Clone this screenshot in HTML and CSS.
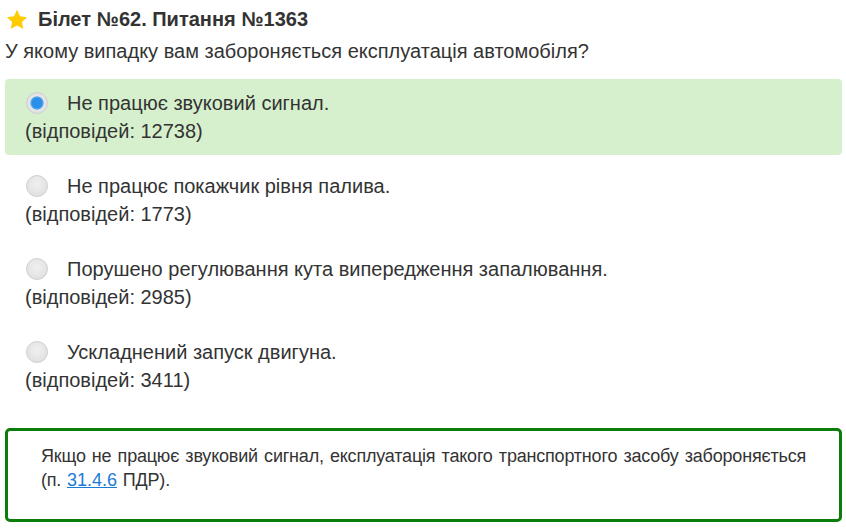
FILE: index.html
```html
<!DOCTYPE html>
<html lang="uk">
<head>
<meta charset="utf-8">
<link rel="stylesheet" href="styles.css">
</head>
<body>
<div class="page">
  <h1 class="title">
    <svg class="star" width="22" height="21" viewBox="0 0 24 23"><path d="M12 0.8l3.3 7.2 7.9 0.9-5.9 5.3 1.7 7.8L12 18l-7 4 1.7-7.8L0.8 8.9l7.9-0.9z" fill="#ffcc00"/></svg>
    Білет №62. Питання №1363
  </h1>
  <p class="question">У якому випадку вам забороняється експлуатація автомобіля?</p>
  <div class="answers">
    <div class="answer correct">
      <div class="answer-line"><span class="radio checked"></span><span>Не працює звуковий сигнал.</span></div>
      <div class="count">(відповідей: 12738)</div>
    </div>
    <div class="answer">
      <div class="answer-line"><span class="radio"></span><span>Не працює покажчик рівня палива.</span></div>
      <div class="count">(відповідей: 1773)</div>
    </div>
    <div class="answer">
      <div class="answer-line"><span class="radio"></span><span>Порушено регулювання кута випередження запалювання.</span></div>
      <div class="count">(відповідей: 2985)</div>
    </div>
    <div class="answer">
      <div class="answer-line"><span class="radio"></span><span>Ускладнений запуск двигуна.</span></div>
      <div class="count">(відповідей: 3411)</div>
    </div>
  </div>
  <div class="explain">
    <p>Якщо не працює звуковий сигнал, експлуатація такого транспортного засобу забороняється (п.&nbsp;<a href="#">31.4.6</a>&nbsp;ПДР).</p>
  </div>
</div>
</body>
</html>
```
FILE: styles.css
```css
html, body { margin: 0; padding: 0; background: #fff; }
body { font-family: "Liberation Sans", Arial, sans-serif; color: #333; }
.page { padding: 6px 4px 0 5px; }
.title { margin: 0; font-size: 20px; font-weight: bold; line-height: 26px; display: flex; align-items: center; gap: 10px; padding-left: 1px; }
.star { flex: none; }
.question { margin: 5px 0 0; font-size: 20px; line-height: 28px; }
.answers { margin-top: 14px; display: flex; flex-direction: column; gap: 7px; }
.answer { padding: 10px 20px 10px 20px; border-radius: 4px; font-size: 20px; line-height: 28px; }
.answer.correct { background: #d6f0ce; }
.answer-line { display: flex; align-items: center; }
.radio { width: 22px; height: 22px; border-radius: 50%; border: 1px solid #cfcfcf; background: radial-gradient(circle at 50% 40%, #f0f0f0, #dcdcdc); margin: 0 19px 0 1px; box-sizing: border-box; flex: none; }
.radio.checked { background: radial-gradient(circle, #2b8fe9 0 5px, #4ba4f0 5.5px 6.2px, #e6e6e6 7px, #dadada); }
.explain { margin-top: 24px; border: 3px solid #0a7d0a; border-radius: 5px; padding: 13px 33px 0 33px; height: 94px; box-sizing: border-box; }
.explain p { margin: 0; font-size: 18px; line-height: 24px; letter-spacing: -0.2px; text-align: justify; }
.explain a { color: #1a7bd6; letter-spacing: 0; margin: 0 1px; }
```
